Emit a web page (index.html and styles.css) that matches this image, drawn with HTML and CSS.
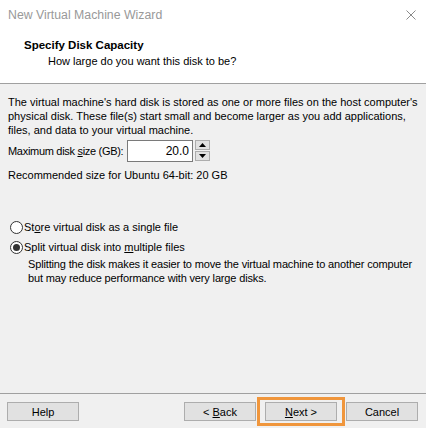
FILE: index.html
```html
<!DOCTYPE html>
<html>
<head>
<meta charset="utf-8">
<link rel="stylesheet" href="styles.css">
</head>
<body>
<div class="window">
  <div class="titlebar">
    <span class="title">New Virtual Machine Wizard</span>
    <svg class="close" width="10" height="10" viewBox="0 0 10 10"><path d="M0.5 0.5 L9.5 9.5 M9.5 0.5 L0.5 9.5" stroke="#8a8a8a" stroke-width="1" fill="none"/></svg>
  </div>
  <div class="header">
    <div class="h-title">Specify Disk Capacity</div>
    <div class="h-sub">How large do you want this disk to be?</div>
  </div>
  <div class="content">
    <p class="para">The virtual machine's hard disk is stored as one or more files on the host computer's physical disk. These file(s) start small and become larger as you add applications, files, and data to your virtual machine.</p>
    <div class="size-row">
      <span class="label">Maximum disk <u>s</u>ize (GB):</span>
      <span class="input">20.0</span>
      <span class="spin">
        <span class="spin-btn"><svg width="7" height="4" viewBox="0 0 7 4"><path d="M3.5 0 L7 4 L0 4 Z" fill="#000"/></svg></span>
        <span class="spin-btn"><svg width="7" height="4" viewBox="0 0 7 4"><path d="M0 0 L7 0 L3.5 4 Z" fill="#000"/></svg></span>
      </span>
    </div>
    <div class="rec">Recommended size for Ubuntu 64-bit: 20 GB</div>
    <div class="radios">
      <div class="radio-row"><span class="radio"></span><span>St<u>o</u>re virtual disk as a single file</span></div>
      <div class="radio-row"><span class="radio checked"></span><span>Split virtual disk into <u>m</u>ultiple files</span></div>
      <p class="desc">Splitting the disk makes it easier to move the virtual machine to another computer but may reduce performance with very large disks.</p>
    </div>
  </div>
  <div class="footer">
    <button class="btn help">Help</button>
    <div class="spacer"></div>
    <button class="btn back">&lt; <u>B</u>ack</button>
    <span class="focus"><button class="btn"><u>N</u>ext &gt;</button></span>
    <button class="btn cancel">Cancel</button>
  </div>
</div>
</body>
</html>
```
FILE: styles.css
```css
html, body {
  margin: 0;
  padding: 0;
  background: #f0f0f0;
}
.window {
  width: 426px;
  height: 428px;
  font-family: "Liberation Sans", Arial, sans-serif;
  font-size: 11px;
  color: #000;
  display: flex;
  flex-direction: column;
  overflow: hidden;
}
.titlebar {
  height: 29px;
  background: #fff;
  display: flex;
  align-items: center;
  justify-content: space-between;
  padding: 0 10px 2px 8px;
}
.title {
  color: #999;
  font-size: 12.3px;
}
.close {
  display: block;
}
.header {
  background: #fff;
  height: 53px;
  padding-left: 24px;
  border-bottom: 1px solid #a0a0a0;
  box-sizing: border-box;
}
.h-title {
  font-weight: bold;
  font-size: 11.5px;
  line-height: 16px;
  padding-top: 6px;
}
.h-sub {
  padding-left: 24px;
  line-height: 16px;
}
.content {
  flex: 1;
  padding: 11px 8px 0 8px;
}
.para {
  margin: 0;
  line-height: 14px;
}
.size-row {
  display: flex;
  align-items: center;
  margin-top: 2px;
  height: 23px;
}
.label {
  flex: none;
  width: 119px;
  white-space: nowrap;
  letter-spacing: -0.3px;
}
.input {
  width: 66px;
  height: 22px;
  box-sizing: border-box;
  border: 1px solid #7a7a7a;
  background: #fff;
  text-align: right;
  line-height: 20px;
  padding-right: 3px;
  font-size: 12px;
}
.spin {
  display: flex;
  flex-direction: column;
  margin-left: 2px;
  gap: 1px;
}
.spin-btn {
  width: 15px;
  height: 10px;
  box-sizing: border-box;
  border: 1px solid #adadad;
  background: #e1e1e1;
  display: flex;
  align-items: center;
  justify-content: center;
}
.spin-btn svg { display: block; }
.rec {
  margin-top: 6px;
  line-height: 14px;
}
.radios {
  margin-top: 35px;
  padding-left: 2px;
}
.radio-row {
  display: flex;
  align-items: center;
  height: 20px;
}
.radio {
  width: 13px;
  height: 13px;
  box-sizing: border-box;
  border: 1px solid #333;
  border-radius: 50%;
  background: #fff;
  margin-right: 1px;
  position: relative;
}
.radio.checked::after {
  content: "";
  position: absolute;
  left: 2px;
  top: 2px;
  width: 7px;
  height: 7px;
  border-radius: 50%;
  background: #333;
}
.desc {
  margin: 0 0 0 18px;
  line-height: 14px;
  letter-spacing: -0.15px;
}
.footer {
  border-top: 1px solid #a0a0a0;
  height: 35px;
  display: flex;
  align-items: flex-start;
  padding: 8px 8px 0 7px;
  box-sizing: border-box;
}
.spacer { flex: 1; }
.btn {
  width: 72px;
  height: 19px;
  border: 1px solid #adadad;
  background: #e1e1e1;
  font-family: "Liberation Sans", Arial, sans-serif;
  font-size: 11px;
  color: #000;
  padding: 0;
}
.back { margin-right: 1px; }
.focus {
  margin-top: -5px;
  border: 3px solid #f0963c;
  padding: 2px 5px;
  display: flex;
}
.cancel { margin-left: 1px; }
```
